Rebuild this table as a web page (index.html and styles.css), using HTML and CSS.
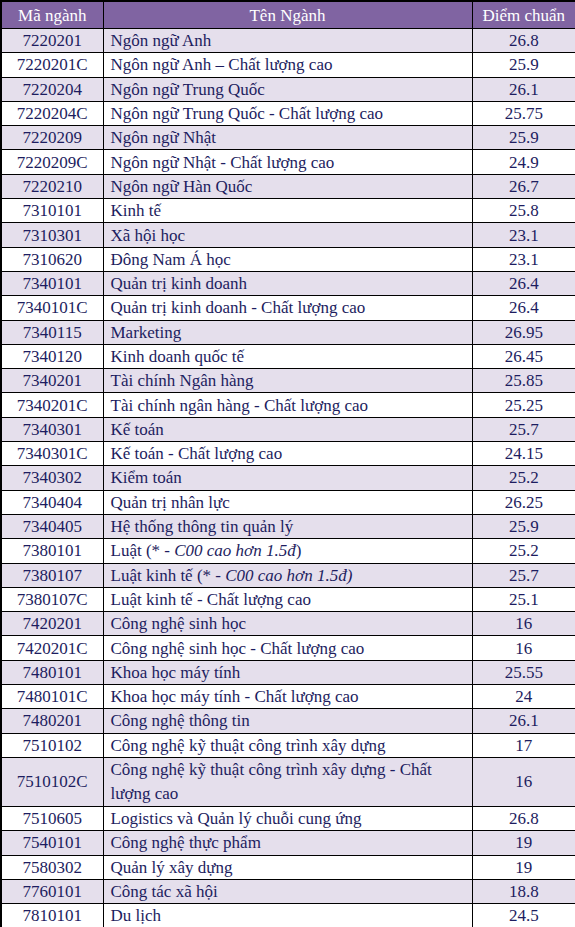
FILE: index.html
```html
<!DOCTYPE html>
<html lang="vi">
<head>
<meta charset="utf-8">
<title>Điểm chuẩn</title>
<link rel="stylesheet" href="styles.css">
</head>
<body>
<table class="scores">
  <colgroup>
    <col class="c-code">
    <col class="c-name">
    <col class="c-score">
  </colgroup>
  <thead>
    <tr><th>Mã ngành</th><th>Tên Ngành</th><th>Điểm chuẩn</th></tr>
  </thead>
  <tbody>
    <tr><td>7220201</td><td>Ngôn ngữ Anh</td><td>26.8</td></tr>
    <tr><td>7220201C</td><td>Ngôn ngữ Anh – Chất lượng cao</td><td>25.9</td></tr>
    <tr><td>7220204</td><td>Ngôn ngữ Trung Quốc</td><td>26.1</td></tr>
    <tr><td>7220204C</td><td>Ngôn ngữ Trung Quốc - Chất lượng cao</td><td>25.75</td></tr>
    <tr><td>7220209</td><td>Ngôn ngữ Nhật</td><td>25.9</td></tr>
    <tr><td>7220209C</td><td>Ngôn ngữ Nhật - Chất lượng cao</td><td>24.9</td></tr>
    <tr><td>7220210</td><td>Ngôn ngữ Hàn Quốc</td><td>26.7</td></tr>
    <tr><td>7310101</td><td>Kinh tế</td><td>25.8</td></tr>
    <tr><td>7310301</td><td>Xã hội học</td><td>23.1</td></tr>
    <tr><td>7310620</td><td>Đông Nam Á học</td><td>23.1</td></tr>
    <tr><td>7340101</td><td>Quản trị kinh doanh</td><td>26.4</td></tr>
    <tr><td>7340101C</td><td>Quản trị kinh doanh - Chất lượng cao</td><td>26.4</td></tr>
    <tr><td>7340115</td><td>Marketing</td><td>26.95</td></tr>
    <tr><td>7340120</td><td>Kinh doanh quốc tế</td><td>26.45</td></tr>
    <tr><td>7340201</td><td>Tài chính Ngân hàng</td><td>25.85</td></tr>
    <tr><td>7340201C</td><td>Tài chính ngân hàng - Chất lượng cao</td><td>25.25</td></tr>
    <tr><td>7340301</td><td>Kế toán</td><td>25.7</td></tr>
    <tr><td>7340301C</td><td>Kế toán - Chất lượng cao</td><td>24.15</td></tr>
    <tr><td>7340302</td><td>Kiểm toán</td><td>25.2</td></tr>
    <tr><td>7340404</td><td>Quản trị nhân lực</td><td>26.25</td></tr>
    <tr><td>7340405</td><td>Hệ thống thông tin quản lý</td><td>25.9</td></tr>
    <tr><td>7380101</td><td>Luật (* - <em>C00 cao hơn 1.5đ</em>)</td><td>25.2</td></tr>
    <tr><td>7380107</td><td>Luật kinh tế (* - <em>C00 cao hơn 1.5đ)</em></td><td>25.7</td></tr>
    <tr><td>7380107C</td><td>Luật kinh tế - Chất lượng cao</td><td>25.1</td></tr>
    <tr><td>7420201</td><td>Công nghệ sinh học</td><td>16</td></tr>
    <tr><td>7420201C</td><td>Công nghệ sinh học - Chất lượng cao</td><td>16</td></tr>
    <tr><td>7480101</td><td>Khoa học máy tính</td><td>25.55</td></tr>
    <tr><td>7480101C</td><td>Khoa học máy tính - Chất lượng cao</td><td>24</td></tr>
    <tr><td>7480201</td><td>Công nghệ thông tin</td><td>26.1</td></tr>
    <tr><td>7510102</td><td>Công nghệ kỹ thuật công trình xây dựng</td><td>17</td></tr>
    <tr class="tall"><td>7510102C</td><td>Công nghệ kỹ thuật công trình xây dựng - Chất lượng cao</td><td>16</td></tr>
    <tr><td>7510605</td><td>Logistics và Quản lý chuỗi cung ứng</td><td>26.8</td></tr>
    <tr><td>7540101</td><td>Công nghệ thực phẩm</td><td>19</td></tr>
    <tr><td>7580302</td><td>Quản lý xây dựng</td><td>19</td></tr>
    <tr><td>7760101</td><td>Công tác xã hội</td><td>18.8</td></tr>
    <tr><td>7810101</td><td>Du lịch</td><td>24.5</td></tr>
  </tbody>
</table>
</body>
</html>
```
FILE: styles.css
```css
html, body {
  margin: 0;
  padding: 0;
  background: #ffffff;
}

.scores {
  width: 575px;
  border-collapse: collapse;
  table-layout: fixed;
  font-family: "Liberation Serif", "Times New Roman", serif;
  font-size: 17px;
  color: #1d1d60;
  border: 2px solid #000;
}

.c-code { width: 102px; }
.c-name { width: 369px; }
.c-score { width: 104px; }

.scores th,
.scores td {
  border: 1px solid #000;
  padding: 0 7px;
  line-height: 23px;
  vertical-align: middle;
}

.scores th {
  background: #8064a2;
  color: #ffffff;
  font-weight: normal;
  font-size: 17px;
  height: 26px;
  text-align: center;
}

.scores tbody tr {
  height: 24.3px;
}

.scores tbody tr:nth-child(odd) {
  background: #e5dfec;
}

.scores td:first-child,
.scores td:last-child {
  text-align: center;
}

.scores td:nth-child(2) {
  text-align: left;
}

.scores tr.tall td {
  line-height: 24px;
}

.scores em {
  font-style: italic;
}
```
